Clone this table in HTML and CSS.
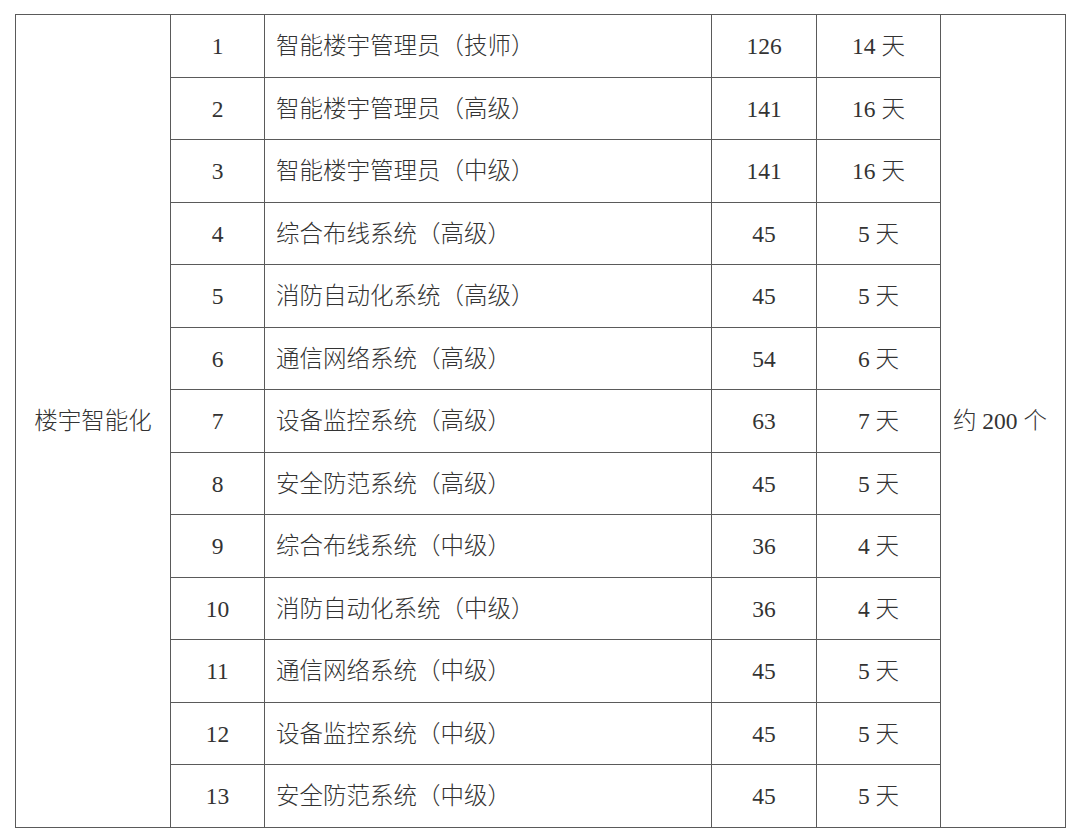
FILE: index.html
```html
<!DOCTYPE html>
<html lang="zh">
<head>
<meta charset="utf-8">
<link rel="stylesheet" href="styles.css">
</head>
<body>
<table class="grid">
<colgroup>
<col class="c1"><col class="c2"><col class="c3"><col class="c4"><col class="c5"><col class="c6">
</colgroup>
<tbody>
<tr><td class="cat" rowspan="13">楼宇智能化</td><td class="ctr">1</td><td class="name">智能楼宇管理员（技师）</td><td class="ctr">126</td><td class="ctr">14 天</td><td class="total" rowspan="13">约 200 个</td></tr>
<tr><td class="ctr">2</td><td class="name">智能楼宇管理员（高级）</td><td class="ctr">141</td><td class="ctr">16 天</td></tr>
<tr><td class="ctr">3</td><td class="name">智能楼宇管理员（中级）</td><td class="ctr">141</td><td class="ctr">16 天</td></tr>
<tr><td class="ctr">4</td><td class="name">综合布线系统（高级）</td><td class="ctr">45</td><td class="ctr">5 天</td></tr>
<tr><td class="ctr">5</td><td class="name">消防自动化系统（高级）</td><td class="ctr">45</td><td class="ctr">5 天</td></tr>
<tr><td class="ctr">6</td><td class="name">通信网络系统（高级）</td><td class="ctr">54</td><td class="ctr">6 天</td></tr>
<tr><td class="ctr">7</td><td class="name">设备监控系统（高级）</td><td class="ctr">63</td><td class="ctr">7 天</td></tr>
<tr><td class="ctr">8</td><td class="name">安全防范系统（高级）</td><td class="ctr">45</td><td class="ctr">5 天</td></tr>
<tr><td class="ctr">9</td><td class="name">综合布线系统（中级）</td><td class="ctr">36</td><td class="ctr">4 天</td></tr>
<tr><td class="ctr">10</td><td class="name">消防自动化系统（中级）</td><td class="ctr">36</td><td class="ctr">4 天</td></tr>
<tr><td class="ctr">11</td><td class="name">通信网络系统（中级）</td><td class="ctr">45</td><td class="ctr">5 天</td></tr>
<tr><td class="ctr">12</td><td class="name">设备监控系统（中级）</td><td class="ctr">45</td><td class="ctr">5 天</td></tr>
<tr><td class="ctr">13</td><td class="name">安全防范系统（中级）</td><td class="ctr">45</td><td class="ctr">5 天</td></tr>
</tbody>
</table>
</body>
</html>
```
FILE: styles.css
```css
html, body {
  margin: 0;
  padding: 0;
  background: #ffffff;
}
body {
  padding: 14px 0 0 15px;
  font-family: "Liberation Serif", "Noto Sans CJK SC", serif;
  font-size: 23.5px;
  font-weight: 300;
  color: #333333;
  text-spacing-trim: space-all;
}
.grid {
  border-collapse: collapse;
  table-layout: fixed;
  width: 1050px;
}
.c1 { width: 155px; }
.c2 { width: 94px; }
.c3 { width: 447px; }
.c4 { width: 105px; }
.c5 { width: 124px; }
.c6 { width: 125px; }
.grid td {
  border: 1px solid #5a5a5a;
  height: 62.5px;
  padding: 2px 0 0 0;
  box-sizing: border-box;
  vertical-align: middle;
  line-height: 1;
}
.grid .ctr, .grid .cat { text-align: center; }
.grid .name { text-align: left; padding-left: 11px; }
.grid .total { text-align: left; padding-left: 12px; }
```
